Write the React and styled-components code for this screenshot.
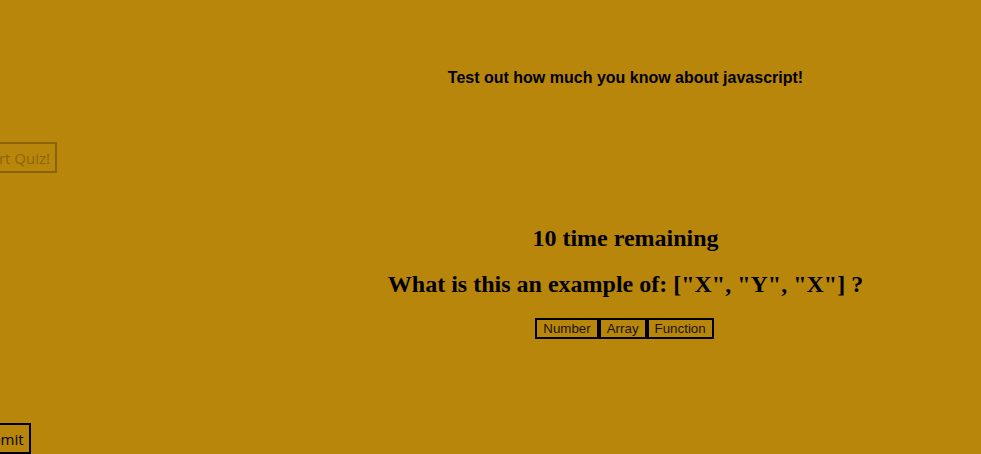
import React from 'react';
import styled, { createGlobalStyle } from 'styled-components';

const GlobalStyle = createGlobalStyle`
    html, body {
        margin: 0;
        padding: 0;
        background-color: darkgoldenrod;
        overflow: hidden;
    }
`;

const Page = styled.div`
    display: flex;
    width: 981px;
    height: 454px;
    overflow: hidden;
`;

const Sidebar = styled.div`
    display: flex;
    flex-direction: column;
    justify-content: space-between;
    width: 270px;
    flex-shrink: 0;
    padding-top: 142px;
    box-sizing: border-box;
`;

const SideButton = styled.button`
    align-self: flex-start;
    font-family: "Open Sans", "Liberation Sans", sans-serif;
    font-size: 15px;
    height: 31px;
    padding: 0 5px;
    background: transparent;
    color: black;
    border: 2px solid black;
    margin-left: ${props => props.$shift}px;
    opacity: ${props => (props.$faded ? 0.25 : 1)};
`;

const Main = styled.div`
    flex: 1;
    display: flex;
    flex-direction: column;
    align-items: center;
    padding-top: 69px;
`;

const Intro = styled.p`
    margin: 0;
    font-family: "Liberation Sans", Arial, sans-serif;
    font-weight: bold;
    font-size: 16px;
    line-height: 18px;
`;

const Timer = styled.h2`
    margin: 137px 0 0;
    font-family: "Liberation Serif", "Times New Roman", serif;
    font-size: 24px;
    line-height: 28px;
`;

const Question = styled.h2`
    margin: 18px 0 0;
    font-family: "Liberation Serif", "Times New Roman", serif;
    font-size: 24px;
    line-height: 28px;
`;

const Choices = styled.div`
    display: flex;
    margin-top: 20px;
    margin-right: 2px;
`;

const Choice = styled.button`
    font-family: "Liberation Sans", Arial, sans-serif;
    font-size: 13.33px;
    height: 21px;
    padding: 0 6px;
    background: transparent;
    color: #1a1200;
    border: 2px solid black;
`;

const choices = ['Number', 'Array', 'Function'];

function App() {
    return (
        <>
            <GlobalStyle />
            <Page>
                <Sidebar>
                    <SideButton $shift={-30} $faded>Start Quiz!</SideButton>
                    <SideButton $shift={-33}>Submit</SideButton>
                </Sidebar>
                <Main>
                    <Intro>Test out how much you know about javascript!</Intro>
                    <Timer>10 time remaining</Timer>
                    <Question>What is this an example of: ["X", "Y", "X"] ?</Question>
                    <Choices>
                        {choices.map(choice => (
                            <Choice key={choice}>{choice}</Choice>
                        ))}
                    </Choices>
                </Main>
            </Page>
        </>
    );
}

export default App;
